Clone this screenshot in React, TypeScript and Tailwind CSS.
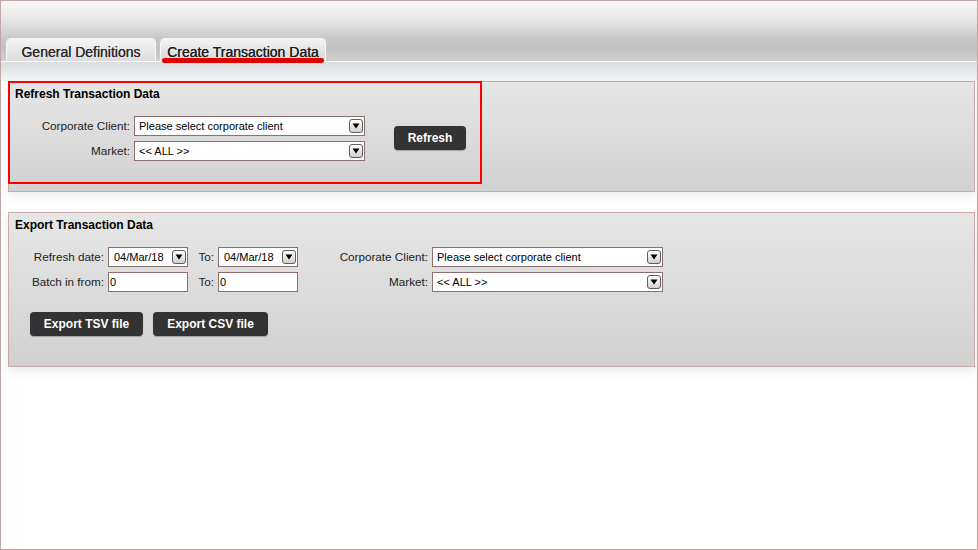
import React from "react";

function Arrow() {
  return (
    <div className="w-[14px] h-[14px] rounded-[3px] border border-[#5e5e5e] bg-[linear-gradient(to_bottom,#ffffff,#cfcfcf)] flex items-center justify-center shrink-0">
      <svg width="8" height="6" viewBox="0 0 8 6">
        <path d="M0.5 0.5 L7.5 0.5 L4 5.5 Z" fill="#000" />
      </svg>
    </div>
  );
}

function Select({ text, w, pl = "pl-[4px]" }: { text: string; w: string; pl?: string }) {
  return (
    <div
      className={`${w} h-[20px] bg-white border border-[#8c7070] flex items-center justify-between ${pl} pr-[1px] text-[11px] text-black leading-none shrink-0`}
    >
      <span>{text}</span>
      <Arrow />
    </div>
  );
}

function Input({ w }: { w: string }) {
  return (
    <div className={`${w} h-[20px] bg-white border border-[#8c7070] flex items-end pl-[1px] pb-[3px] text-[11px] text-black leading-none shrink-0`}>
      0
    </div>
  );
}

function Label({ text, w }: { text: string; w: string }) {
  return <div className={`${w} text-right text-[11.7px] text-[#222] leading-[20px] shrink-0`}>{text}</div>;
}

function Button({ text, w }: { text: string; w: string }) {
  return (
    <div
      className={`${w} h-[24px] bg-[#333333] rounded-[4px] text-white font-bold text-[12px] flex items-center justify-center shadow-[0_1px_1px_rgba(0,0,0,0.25)]`}
    >
      {text}
    </div>
  );
}

export default function App() {
  return (
    <div className="w-[978px] h-[550px] border border-[#c1a6a6] bg-white overflow-hidden font-['Liberation_Sans',Arial,sans-serif]">
      {/* header with tabs */}
      <div className="h-[60px] bg-[linear-gradient(to_bottom,#f8f8f8_0%,#e8e8e8_30%,#c8c8c8_62%,#c2c2c2_78%,#cfcfcf_100%)] flex items-end pl-[5px] gap-[4px]">
        <div className="w-[150px] h-[23px] rounded-t-[5px] border border-b-0 border-[#f6f6f6] bg-[linear-gradient(to_bottom,#f4f4f4,#dcdcdc)] flex justify-center pt-[5px] text-[14px] leading-[16px] text-[#2a2a2a] [text-shadow:0_0_0.6px_#333]">
          General Definitions
        </div>
        <div className="relative w-[166px] h-[23px] rounded-t-[5px] border border-b-0 border-[#f6f6f6] bg-[linear-gradient(to_bottom,#f4f4f4,#d6d6d6)] flex justify-center pt-[5px] text-[14px] leading-[16px] text-[#1e1e1e] [text-shadow:0_0_0.6px_#222]">
          Create Transaction Data
          <div className="absolute left-[1px] right-[1px] bottom-[-2px] h-[5px] rounded-full bg-[#e00000] z-10" />
        </div>
      </div>
      <div className="h-[1px] bg-[#f8f8f8]" />
      <div className="h-[19px] bg-[linear-gradient(to_bottom,#d9dddf,#f4f6f6)]" />

      {/* Refresh panel */}
      <div className="relative ml-[7px] w-[967px] border border-[#c9a9a9] bg-[linear-gradient(to_bottom,#e6e6e6,#d1d1d1)] pt-[5px] pb-[30px] shadow-[0_4px_10px_rgba(0,0,0,0.08)]">
        <div className="pl-[6px] text-[12px] font-bold leading-[14px] text-black">Refresh Transaction Data</div>
        <div className="mt-[15px] flex items-center">
          <div className="flex flex-col gap-[5px]">
            <div className="flex items-center">
              <Label text="Corporate Client:" w="w-[121px]" />
              <div className="ml-[4px]">
                <Select text="Please select corporate client" w="w-[231px]" />
              </div>
            </div>
            <div className="flex items-center">
              <Label text="Market:" w="w-[121px]" />
              <div className="ml-[4px]">
                <Select text="<< ALL >>" w="w-[231px]" />
              </div>
            </div>
          </div>
          <div className="ml-[29px] mb-[2px]">
            <Button text="Refresh" w="w-[72px]" />
          </div>
        </div>
        <div className="absolute left-[-1px] top-[-1px] w-[474px] h-[103px] border-2 border-[#ff0000] pointer-events-none" />
      </div>

      {/* Export panel */}
      <div className="mt-[20px] ml-[7px] w-[967px] border border-[#c9a9a9] bg-[linear-gradient(to_bottom,#e6e6e6,#d1d1d1)] pt-[5px] pb-[30px] shadow-[0_4px_10px_rgba(0,0,0,0.09)]">
        <div className="pl-[6px] text-[12px] font-bold leading-[14px] text-black">Export Transaction Data</div>
        <div className="mt-[15px] flex flex-col gap-[5px]">
          <div className="flex items-center">
            <Label text="Refresh date:" w="w-[95px]" />
            <div className="ml-[4px]">
              <Select text="04/Mar/18" w="w-[80px]" pl="pl-[5px]" />
            </div>
            <Label text="To:" w="w-[26px]" />
            <div className="ml-[4px]">
              <Select text="04/Mar/18" w="w-[80px]" pl="pl-[5px]" />
            </div>
            <Label text="Corporate Client:" w="w-[130px]" />
            <div className="ml-[4px]">
              <Select text="Please select corporate client" w="w-[231px]" />
            </div>
          </div>
          <div className="flex items-center">
            <Label text="Batch in from:" w="w-[95px]" />
            <div className="ml-[4px]">
              <Input w="w-[80px]" />
            </div>
            <Label text="To:" w="w-[26px]" />
            <div className="ml-[4px]">
              <Input w="w-[80px]" />
            </div>
            <Label text="Market:" w="w-[130px]" />
            <div className="ml-[4px]">
              <Select text="<< ALL >>" w="w-[231px]" />
            </div>
          </div>
        </div>
        <div className="mt-[20px] ml-[21px] flex gap-[10px]">
          <Button text="Export TSV file" w="w-[113px]" />
          <Button text="Export CSV file" w="w-[115px]" />
        </div>
      </div>
    </div>
  );
}
